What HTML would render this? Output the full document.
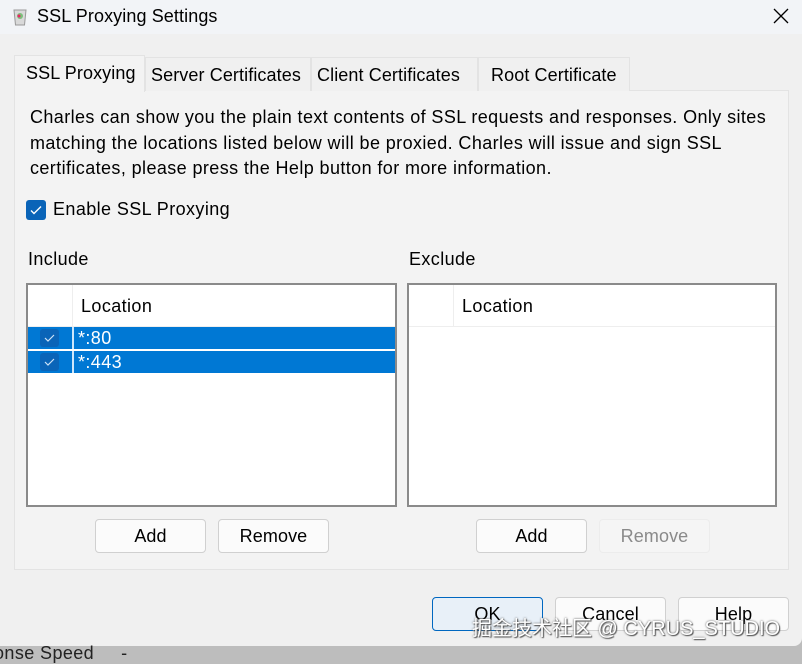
<!DOCTYPE html>
<html><head><meta charset="utf-8"><style>
*{margin:0;padding:0;box-sizing:border-box}
body{width:802px;height:657px;overflow:hidden;background:#bdbdbd;font-family:"Liberation Sans","Noto Sans CJK SC",sans-serif;color:#000;position:relative;letter-spacing:0.4px}
.a{position:absolute;white-space:nowrap}
#win{position:absolute;left:0;top:0;width:802px;height:646px;background:#f0f0f0;border-bottom-right-radius:8px}
#title{position:absolute;left:0;top:0;width:802px;height:34px;background:#f2f4f7}
.tab{position:absolute;top:57px;height:34px;font-size:18px;line-height:34px;padding:0 5px;background:#f0f0f0;border:1px solid #e3e3e3;border-bottom:none;white-space:nowrap;letter-spacing:0.1px;overflow:hidden}
#panel{position:absolute;left:14px;top:90px;width:775px;height:480px;background:#f3f3f3;border:1px solid #e3e3e3}
.t{font-size:18px}
.tbl{position:absolute;top:283px;height:224px;background:#fff;border:2px solid #8a8a8a}
.hdr{position:absolute;left:0;right:0;top:0;height:42px;border-bottom:1px solid #eee}
.btn{position:absolute;height:34px;background:#fbfbfb;border:1px solid #d0d0d0;border-radius:4px;font-size:18px;text-align:center;line-height:32px;letter-spacing:0.1px}
.row{position:absolute;left:0;right:0;height:22px;background:#0078d4;color:#fff;font-size:18px;line-height:22px}
.cb{position:absolute;left:12px;top:2px;width:19px;height:18px;background:#0a64b8;border-radius:3px}
</style></head><body>
<div id="win">
<div id="title"></div>
<svg class="a" style="left:12px;top:7px" width="16" height="20" viewBox="0 0 16 20"><path d="M2 3h12l-1.5 15h-9z" fill="#d9d9d9" stroke="#999"/><circle cx="8" cy="9" r="3" fill="#7bbf7b"/><circle cx="7" cy="9" r="1.5" fill="#e26"/></svg>
<div class="a" style="left:37px;top:6px;font-size:18px;letter-spacing:0.1px">SSL Proxying Settings</div>
<svg class="a" style="left:773px;top:8px" width="16" height="16"><path d="M1 1L15 15M15 1L1 15" stroke="#000" stroke-width="1.3"/></svg>

<div id="panel"></div>
<div class="tab" style="left:14px;top:55px;height:37px;width:131px;background:#f3f3f3;line-height:34px;padding-left:11px">SSL Proxying</div>
<div class="tab" style="left:145px;width:166px">Server Certificates</div>
<div class="tab" style="left:311px;width:167px">Client Certificates</div>
<div class="tab" style="left:478px;width:152px;padding-left:12px">Root Certificate</div>

<div class="a t" style="left:30px;top:105px;line-height:25.5px">Charles can show you the plain text contents of SSL requests and responses. Only sites<br>matching the locations listed below will be proxied. Charles will issue and sign SSL<br>certificates, please press the Help button for more information.</div>

<div class="a" style="left:26px;top:200px;width:20px;height:20px;background:#0a64b8;border-radius:3px"></div>
<svg class="a" style="left:29px;top:203px" width="14" height="14"><path d="M2 7.5l3 3 7-7" stroke="#fff" stroke-width="1.4" fill="none"/></svg>
<div class="a t" style="left:53px;top:199px">Enable SSL Proxying</div>

<div class="a t" style="left:28px;top:249px">Include</div>
<div class="a t" style="left:409px;top:249px">Exclude</div>

<div class="tbl" style="left:26px;width:371px">
 <div class="hdr"><div class="a" style="left:44px;top:0;bottom:0;border-left:1px solid #eee"></div><div class="a t" style="left:53px;top:11px">Location</div></div>
 <div class="row" style="top:42px"><div class="cb"></div><svg class="a" style="left:15px;top:5px" width="13" height="12"><path d="M2 6l3 3 6-6" stroke="#cfe3f7" stroke-width="1.2" fill="none"/></svg><div class="a" style="left:44px;top:0;bottom:0;border-left:2px solid #cde6fb"></div><div class="a" style="left:50px;top:0">*:80</div></div>
 <div class="row" style="top:66px"><div class="cb"></div><svg class="a" style="left:15px;top:5px" width="13" height="12"><path d="M2 6l3 3 6-6" stroke="#cfe3f7" stroke-width="1.2" fill="none"/></svg><div class="a" style="left:44px;top:0;bottom:0;border-left:2px solid #cde6fb"></div><div class="a" style="left:50px;top:0">*:443</div></div>
</div>
<div class="tbl" style="left:407px;width:370px">
 <div class="hdr"><div class="a" style="left:44px;top:0;bottom:0;border-left:1px solid #eee"></div><div class="a t" style="left:53px;top:11px">Location</div></div>
</div>

<div class="btn" style="left:95px;top:519px;width:111px">Add</div>
<div class="btn" style="left:218px;top:519px;width:111px">Remove</div>
<div class="btn" style="left:476px;top:519px;width:111px">Add</div>
<div class="btn" style="left:599px;top:519px;width:111px;color:#8a8a8a;background:#f5f5f5;border-color:#ececec">Remove</div>

<div class="btn" style="left:432px;top:597px;width:111px;border-color:#0067c0;background:#e8f0f8">OK</div>
<div class="btn" style="left:555px;top:597px;width:111px">Cancel</div>
<div class="btn" style="left:678px;top:597px;width:111px">Help</div>
<div class="a" style="left:472px;top:612px;font-size:20px;letter-spacing:0;color:#fff;text-shadow:0 0 2px #555,1px 1px 1px #555">掘金技术社区 @ CYRUS_STUDIO</div>
</div>
<div class="a t" style="left:-6px;top:643px;color:#222">onse Speed &nbsp;&nbsp;&nbsp; -</div>
</body></html>
